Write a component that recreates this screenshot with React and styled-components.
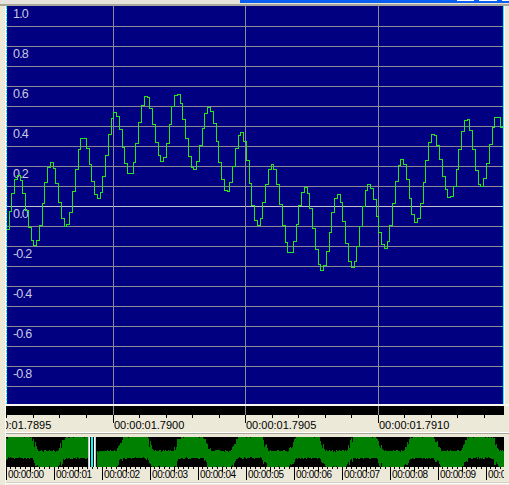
import React from "react";
import styled, { createGlobalStyle } from "styled-components";

const Global = createGlobalStyle`
  html, body { margin: 0; padding: 0; background: #ece9d8; }
  body { font-family: "Liberation Sans", Arial, sans-serif; }
`;

const Window = styled.div`
  width: 509px;
  height: 485px;
  overflow: hidden;
  background: #ece9d8;
  display: flex;
  flex-direction: column;
`;

const TopStrip = styled.div`
  height: 6px;
  display: flex;
  flex-direction: column;
`;

const TitleEdge = styled.div`
  height: 4px;
  background: #e4e2da;
  display: flex;
  justify-content: flex-end;
  align-items: flex-start;
`;

const TitleBlue = styled.div`
  width: 269px;
  height: 3px;
  background: #0b5ff0;
  display: flex;
  gap: 5px;
  padding-left: 217px;
  box-sizing: border-box;
`;

const CaptionEdge = styled.div`
  width: ${(p) => p.$w}px;
  flex: ${(p) => (p.$grow ? 1 : "none")};
  height: 1px;
  background: #ffffff;
`;

const ShadeLine = styled.div`
  height: 2px;
  background: #a9a69c;
`;

const Body = styled.div`
  flex: 1;
  margin-left: 5px;
  border-left: 1px solid #fbfaf4;
  display: flex;
  flex-direction: column;
`;

const ChartFrame = styled.div`
  height: 398px;
  display: flex;
`;

const ChartLeftEdge = styled.div`
  width: 1px;
  background: repeating-linear-gradient(
    to bottom,
    #00ffff 0px,
    #00ffff 3px,
    #ffffff 3px,
    #ffffff 4px
  );
`;

const ChartRightEdge = styled.div`
  width: 1px;
  background: #00ffff;
  border-right: 1px solid #ffffff;
`;

const Plot = styled.svg`
  display: block;
  width: 496px;
  height: 398px;
  background: #000080;
`;

const HighlightLine = styled.div`
  height: 2px;
  background: #f7f6ef;
`;

const TimeBar = styled.svg`
  display: block;
  width: 498px;
  height: 9px;
  background: #000000;
`;

const Ruler = styled.div`
  position: relative;
  width: ${(p) => p.$w}px;
  height: ${(p) => p.$h}px;
  overflow: hidden;
`;

const RulerTicks = styled.svg`
  position: absolute;
  left: 0;
  top: 0;
  display: block;
`;

const RulerLabel = styled.span`
  position: absolute;
  top: ${(p) => p.$top}px;
  font-size: ${(p) => p.$size}px;
  line-height: ${(p) => p.$size}px;
  letter-spacing: ${(p) => p.$spacing}px;
  color: #000000;
  white-space: nowrap;
`;

const Divider = styled.div`
  height: 1px;
  background: #ffffff;
  border-bottom: 1px solid #aca899;
`;

const Gap = styled.div`
  height: 3px;
`;

const Overview = styled.svg`
  display: block;
  width: 498px;
  height: 30px;
  background: #000000;
`;

const BottomEdge = styled.div`
  height: 1px;
  background: #d4d0c8;
  border-bottom: 1px solid #ffffff;
  margin-bottom: 1px;
`;

/* ---------- data ---------- */

const EXT = [
  [2, -0.2], [18, 0.155], [35, -0.195], [51, 0.22], [66, -0.105], [83, 0.345],
  [98, 0.04], [115, 0.47], [130, 0.16], [146, 0.555], [162, 0.225], [177, 0.565],
  [194, 0.185], [209, 0.495], [227, 0.07], [241, 0.37], [258, -0.095], [272, 0.21],
  [290, -0.235], [305, 0.095], [322, -0.32], [338, 0.06], [352, -0.305], [369, 0.11],
  [385, -0.21], [402, 0.235], [416, -0.08], [433, 0.365], [450, 0.04], [467, 0.44],
  [481, 0.095], [497, 0.45], [513, 0.1],
];

function wave(X) {
  for (let i = 0; i < EXT.length - 1; i++) {
    const [x0, v0] = EXT[i];
    const [x1, v1] = EXT[i + 1];
    if (X <= x1) {
      const t = Math.max(0, (X - x0) / (x1 - x0));
      return v0 + ((v1 - v0) * (1 - Math.cos(Math.PI * t))) / 2;
    }
  }
  return EXT[EXT.length - 1][1];
}

const yOf = (v) => Math.round(200 - 200 * v) + 0.5;

function buildWavePath() {
  const step = 2.76;
  const pts = [];
  for (let X = 3; X < 506 + step; X += step) pts.push(X);
  let d = "";
  for (let i = 0; i < pts.length - 1; i++) {
    const xa = Math.round(pts[i] - 7) + 0.5;
    const xb = Math.round(pts[i + 1] - 7) + 0.5;
    const y = yOf(wave(pts[i] + step / 2));
    d += i === 0 ? `M${xa} ${y}` : `V${y}`;
    d += `H${xb}`;
  }
  return d;
}

function rnd(i) {
  const s = Math.sin(i * 12.9898 + 78.233) * 43758.5453;
  return s - Math.floor(s);
}

function buildOverviewPath() {
  let d = "";
  for (let x = 0; x < 498; x++) {
    const X = x + 6;
    const s = Math.cos((2 * Math.PI * (X - 19)) / 57.6);
    const sc = Math.max(-1, Math.min(1, 2.4 * s + 0.15));
    const tr = 1 - Math.abs(sc);
    let u = 7 - 7 * sc + (rnd(x) - 0.6) * (1.5 + 9 * tr);
    let dd = 25.5 - 4.5 * sc + (rnd(x + 777) - 0.4) * (1.5 + 7 * tr);
    u = Math.max(0, Math.round(u));
    dd = Math.min(30, Math.round(dd));
    if (dd - u < 2) dd = u + 2;
    d += `M${x} ${u}h1V${dd}h-1Z`;
  }
  return d;
}

const WAVE = buildWavePath();
const OVERVIEW = buildOverviewPath();

const GRID_X = [113, 245, 378];
const Y_LABELS = ["1.0", "0.8", "0.6", "0.4", "0.2", "0.0", "-0.2", "-0.4", "-0.6", "-0.8"];

const tickPage = (k) => Math.floor(113 + 26.53 * k);

const TOP_TICKS = [];
for (let k = -4; k <= 15; k++) TOP_TICKS.push({ x: tickPage(k) - 6 + 0.5, major: k % 5 === 0 });
const TOP_LABELS = [-5, 0, 5, 10].map((k) => ({
  left: tickPage(k) - 6 + 1,
  text: "00:00:0" + (1.79 + k * 0.0001).toFixed(4),
}));

const OV_TICKS = [];
for (let j = 0; j <= 104; j++) {
  OV_TICKS.push({
    x: Math.floor(4.8 * j) + 0.5,
    h: j % 10 === 0 ? 13 : j % 5 === 0 ? 5 : 2,
  });
}
const OV_LABELS = [];
for (let k = 0; k <= 10; k++) {
  OV_LABELS.push({ left: 48 * k + 2, text: "00:00:" + String(k).padStart(2, "0") });
}

/* ---------- component ---------- */

export default function App() {
  return (
    <>
      <Global />
      <Window>
        <TopStrip>
          <TitleEdge>
            <TitleBlue>
              <CaptionEdge $w={17} />
              <CaptionEdge $w={18} />
              <CaptionEdge $grow />
            </TitleBlue>
          </TitleEdge>
          <ShadeLine />
        </TopStrip>
        <Body>
          <ChartFrame>
            <ChartLeftEdge />
            <Plot viewBox="0 0 496 398" shapeRendering="crispEdges">
              {Array.from({ length: 19 }, (_, i) => i + 1).map((k) => (
                <line
                  key={"h" + k}
                  x1="0"
                  x2="496"
                  y1={20 * k + 0.5}
                  y2={20 * k + 0.5}
                  stroke={k === 10 ? "#c4c4cc" : "#8a8a96"}
                  strokeWidth="1"
                />
              ))}
              {GRID_X.map((px) => (
                <line
                  key={"v" + px}
                  x1={px - 7 + 0.5}
                  x2={px - 7 + 0.5}
                  y1="0"
                  y2="398"
                  stroke="#8a8a96"
                  strokeWidth="1"
                />
              ))}
              {Y_LABELS.map((t, i) => (
                <text
                  key={t}
                  x="6"
                  y={40 * i + 12.4}
                  fill="#c8c8e0"
                  fontSize="12.5"
                  letterSpacing="-0.8"
                  fontFamily="Liberation Sans, Arial, sans-serif"
                  shapeRendering="auto"
                >
                  {t}
                </text>
              ))}
              <path d={WAVE} fill="none" stroke="#22e622" strokeWidth="1" />
            </Plot>
            <ChartRightEdge />
          </ChartFrame>
          <HighlightLine />
          <TimeBar viewBox="0 0 498 9" shapeRendering="crispEdges">
            {GRID_X.map((px) => (
              <line key={px} x1={px - 6 + 0.5} x2={px - 6 + 0.5} y1="0" y2="9" stroke="#8a8a96" />
            ))}
          </TimeBar>
          <Ruler $w={503} $h={17}>
            <RulerTicks width="503" height="17" shapeRendering="crispEdges">
              {TOP_TICKS.map((t) => (
                <line key={t.x} x1={t.x} x2={t.x} y1="0" y2={t.major ? 8 : 3} stroke="#000" />
              ))}
            </RulerTicks>
            {TOP_LABELS.map((l) => (
              <RulerLabel key={l.text} $top={5} $size={11} $spacing={0} style={{ left: l.left }}>
                {l.text}
              </RulerLabel>
            ))}
          </Ruler>
          <Divider />
          <Gap />
          <Overview viewBox="0 0 498 30" shapeRendering="crispEdges">
            <path d={OVERVIEW} fill="#008000" />
            <rect x="82" y="0" width="9" height="30" fill="#000" />
            <rect x="82" y="0" width="1" height="30" fill="#c8c8c8" />
            <rect x="83" y="0" width="1" height="30" fill="#ffffff" />
            <rect x="85" y="0" width="2" height="30" fill="#00ffff" />
            <rect x="88" y="0" width="1" height="30" fill="#ffffff" />
            <rect x="89" y="0" width="1" height="30" fill="#c8c8c8" />
          </Overview>
          <Ruler $w={498} $h={15}>
            <RulerTicks width="498" height="15" shapeRendering="crispEdges">
              {OV_TICKS.map((t) => (
                <line key={t.x} x1={t.x} x2={t.x} y1="0" y2={t.h} stroke="#000" />
              ))}
            </RulerTicks>
            {OV_LABELS.map((l) => (
              <RulerLabel key={l.text} $top={3} $size={10} $spacing={-0.4} style={{ left: l.left }}>
                {l.text}
              </RulerLabel>
            ))}
          </Ruler>
          <BottomEdge />
        </Body>
      </Window>
    </>
  );
}
